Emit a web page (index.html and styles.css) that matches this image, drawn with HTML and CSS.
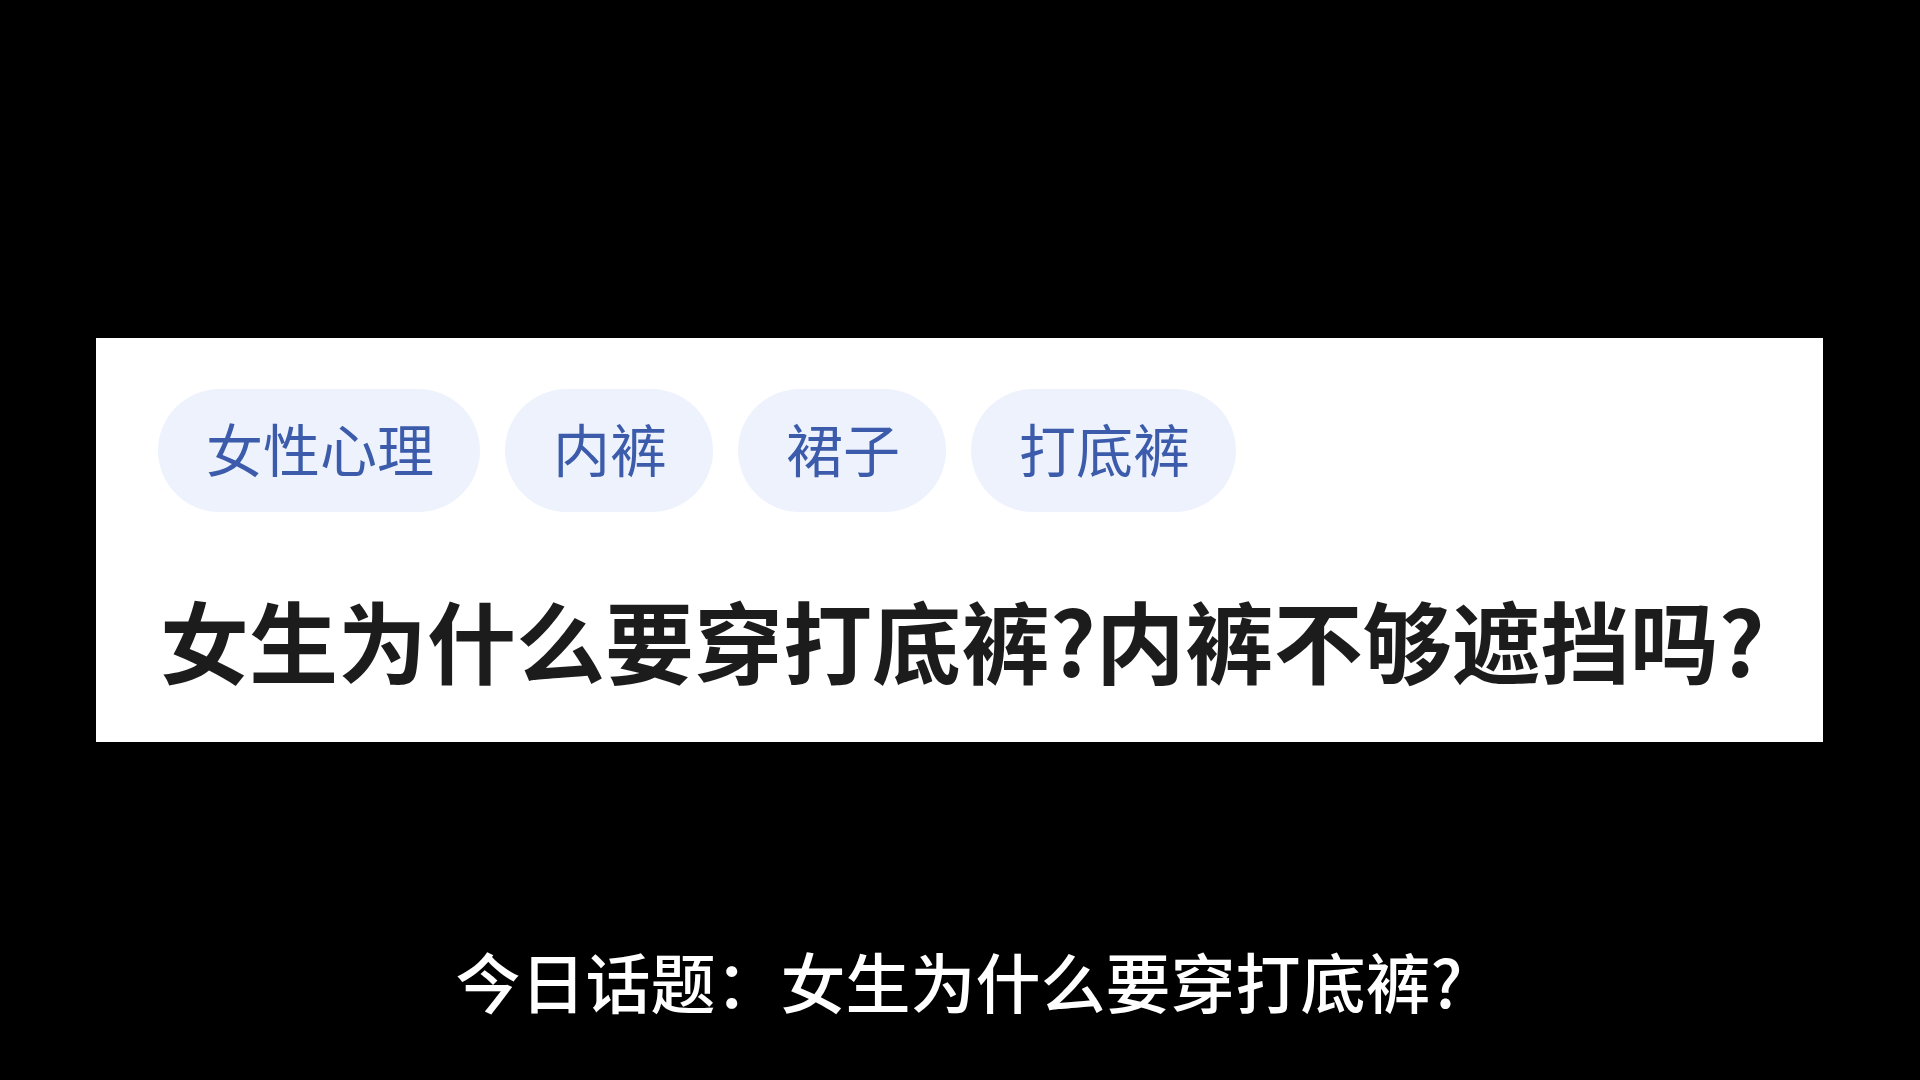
FILE: index.html
```html
<!DOCTYPE html>
<html lang="zh-CN">
<head>
<meta charset="utf-8">
<title>今日话题</title>
<link rel="stylesheet" href="styles.css">
</head>
<body>
<div class="stage">
  <section class="panel">
    <div class="tags">
      <span class="tag">女性心理</span>
      <span class="tag">内裤</span>
      <span class="tag">裙子</span>
      <span class="tag">打底裤</span>
    </div>
    <h1 class="title">女生为什么要穿打底裤?内裤不够遮挡吗?</h1>
  </section>
  <p class="subtitle">今日话题：女生为什么要穿打底裤?</p>
</div>
</body>
</html>
```

FILE: styles.css
```css
html, body {
  margin: 0;
  padding: 0;
  background: #000;
}
body {
  width: 1920px;
  height: 1080px;
  overflow: hidden;
  font-family: "Noto Sans CJK SC", "Noto Sans", sans-serif;
}
.stage {
  padding-top: 338px;
}
.panel {
  box-sizing: border-box;
  margin-left: 96px;
  width: 1727px;
  height: 404px;
  background: #fff;
  padding: 51px 0 0 62px;
}
.tags {
  display: flex;
  gap: 25px;
}
.tag {
  height: 123px;
  box-sizing: border-box;
  display: flex;
  align-items: center;
  padding: 0 46px 6px 48px;
  border-radius: 62px;
  background: #edf2fd;
  color: #3c5cab;
  font-size: 57px;
  line-height: 1;
  font-weight: 400;
}
.title {
  margin: 82px 0 0 2px;
  font-size: 89px;
  line-height: 1;
  font-weight: 700;
  color: #1c1c1c;
  letter-spacing: 0;
  white-space: nowrap;
}
.subtitle {
  margin: 206px 0 0 0;
  text-align: center;
  color: #fff;
  font-size: 65px;
  line-height: 1;
  font-weight: 500;
  padding-right: 2px;
}
```
